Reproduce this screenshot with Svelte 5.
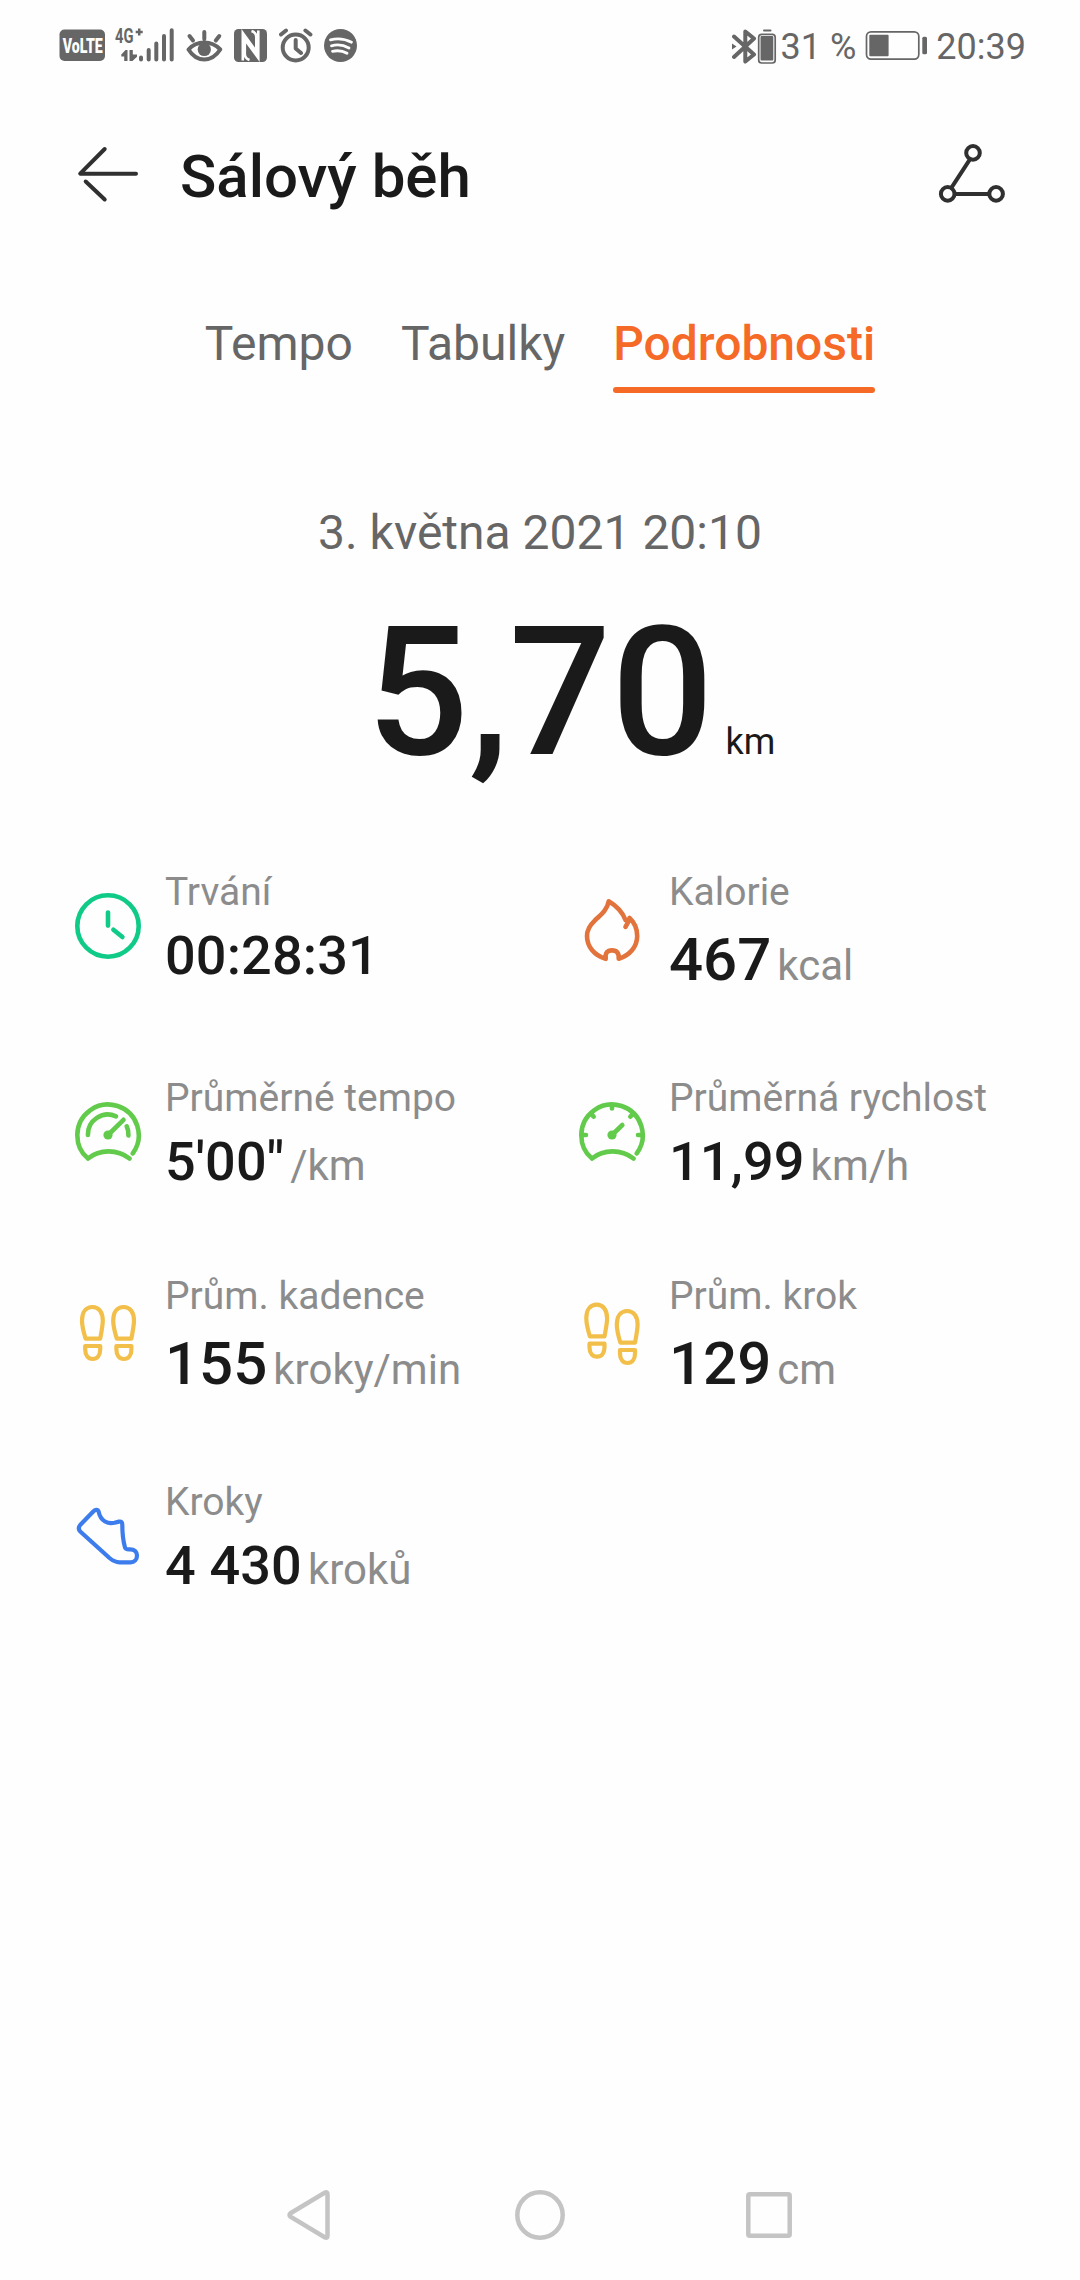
<script>
  const tabs = [
    { label: 'Tempo', active: false },
    { label: 'Tabulky', active: false },
    { label: 'Podrobnosti', active: true }
  ];

  const stats = [
    { icon: 'clock', label: 'Trvání', value: '00:28:31', unit: '', large: false },
    { icon: 'flame', label: 'Kalorie', value: '467', unit: 'kcal', large: true },
    { icon: 'pace', label: 'Průměrné tempo', value: `5'00"`, unit: '/km', large: false },
    { icon: 'speed', label: 'Průměrná rychlost', value: '11,99', unit: 'km/h', large: false },
    { icon: 'cadence', label: 'Prům. kadence', value: '155', unit: 'kroky/min', large: true },
    { icon: 'stride', label: 'Prům. krok', value: '129', unit: 'cm', large: true },
    { icon: 'shoe', label: 'Kroky', value: '4 430', unit: 'kroků', large: false }
  ];
</script>

{#snippet foot(x, y)}
  <g transform="translate({x} {y})">
    <path d="M5.6 33.7C3.2 26 2 20.500 2 15.500C2 7.500 5.800 2 12.400 2S22.800 7.500 22.800 15.500C22.800 20.500 21.600 26 20.200 33.700Z" />
    <path d="M5.200 41H20.200V44.500C20.200 50.500 17.200 54 12.700 54S5.200 50.500 5.200 44.500Z" />
  </g>
{/snippet}

{#snippet icon(name)}
  <svg class="icon {name}" viewBox="0 0 72 72" width="72" height="72">
    {#if name === 'clock'}
      <circle cx="36" cy="36" r="30.700" />
      <path d="M36 22.600V35.600M41.400 39.800L50.400 47" />
    {:else if name === 'flame'}
      <path d="M49.500 27C47 20.500 41.500 13.500 32.700 8.300C31 17.500 24.500 22 18.500 27.800C13.500 32.500 11 37.500 11 43C11 53.500 18 62.200 29.700 65.800C29 60 31.200 57.400 36 57.400S43.200 60 42.700 65.800C54 62.200 61.200 53.500 61.200 43C61.200 36 58.500 29.500 53.500 25C53 28.500 51.500 31 49.500 33.800" />
    {:else if name === 'pace'}
      <path d="M16 62.500C9 57 5.300 48.500 5.300 39A30.700 30.700 0 1 1 60.800 57.300M16 62.500C27.500 53 45.500 53 57.500 62.500" />
      <path d="M15.900 39A20 20 0 0 1 44 20.300M54.700 30.300C56 33 56.600 36 56.400 39.500M36 39L51.500 23.800" />
      <circle class="hub" cx="36" cy="39" r="4.600" />
    {:else if name === 'speed'}
      <path d="M16 62.500C9 57 5.300 48.500 5.300 39A30.700 30.700 0 1 1 60.800 57.300M16 62.500C27.500 53 45.500 53 57.500 62.500" />
      <path d="M36 9V12.500M15.200 18.200L17.700 20.700M56.800 18.200L54.300 20.700M6 39H10M66 39H62M36 39L46.300 29" />
      <circle class="hub" cx="36" cy="39" r="4.600" />
    {:else if name === 'cadence'}
      {@render foot(8, 8)}
      {@render foot(39.2, 8)}
    {:else if name === 'stride'}
      {@render foot(8.300, 5.700)}
      {@render foot(38.800, 12)}
    {:else if name === 'shoe'}
      <path d="M26.500 11.200C28.500 22 36.500 24 42.500 22.800L47 21.600C49.500 21.200 50.300 22.500 50.300 25C50.300 34 51.200 41 53 47.500C53.600 49.600 55.500 49.300 58 49.300C62.500 49.300 65 52 65 55.500C65 59.500 62.500 62.300 58.500 62.300H47.500C43.500 62.300 40.500 60.500 37.500 58L8.500 31.800C6.500 29.800 6.300 27.300 8.200 25L21 11.700C23 9.700 25.800 9.200 26.500 11.200Z" />
    {/if}
  </svg>
{/snippet}

<div class="screen">
  <div class="status">
    <div class="group left">
      <svg viewBox="59 20 117 51" width="117" height="51">
        <rect x="59.500" y="29.500" width="45.500" height="31.500" rx="5" />
        <text class="volte" x="62.700" y="52.500" textLength="40" lengthAdjust="spacingAndGlyphs">VoLTE</text>
        <text class="net" x="115" y="42.800" textLength="18.500" lengthAdjust="spacingAndGlyphs">4G</text>
        <path class="line thin" d="M139.200 28.500V35.500M135.700 32H142.700" />
        <path d="M127.500 50V61H124.200V56.500H121.300V54.500L125.500 50ZM129.500 50H132.800V54.500H137V56.800L132.500 61H129.500Z" />
        <path class="line bars" d="M141 57.500V59.500M148.700 50V59.500M156.300 43.500V59.500M164 36V59.500M171.700 30.300V59.500" />
      </svg>
      <svg class="eye" viewBox="186 28 37 35" width="37" height="35">
        <path class="line" d="M188.500 49.500C193 44.500 198 42.500 204.300 42.500S215.500 44.500 220.300 49.500C216 56 211 59.500 204.300 59.500S192.500 56 188.500 49.500ZM204.300 32V39M189.500 36L193 40.500M219.300 36L215.800 40.500" />
        <circle cx="204.300" cy="49.500" r="6.600" />
      </svg>
      <svg class="nfc" viewBox="234 28 33 35" width="33" height="35">
        <rect x="234" y="29" width="33" height="33" rx="4.500" />
        <path class="cut" d="M242.800 60.500V33L256.300 51.500V37C256.300 33.500 254.500 32 251.500 31M258.300 30.500V58L244.800 39.500V54C244.800 57.500 246.500 59 249.500 60" />
      </svg>
      <svg class="alarm" viewBox="279 28 34 35" width="34" height="35">
        <circle class="line" cx="295.700" cy="47.500" r="13" />
        <path class="line" d="M295.700 40V48.500L301 53M281 34.500L286 30.500M310.400 34.500L305.400 30.500" />
      </svg>
      <svg class="music" viewBox="324 28 33 35" width="33" height="35">
        <circle cx="340.500" cy="45.500" r="16.500" />
        <path class="cut" d="M330.500 39.800C337.500 38 345 38.800 351.500 42.200M331.500 45.800C337.500 44.200 343.500 45 349 48M332.500 51.300C337.500 50.200 342.500 50.700 347 53.300" />
      </svg>
    </div>
    <div class="group right">
      <svg viewBox="731 28 45 36" width="45" height="36">
        <path class="line" d="M733 35.500L753 53.500L744.300 60.500V30.500L753 37.500L733 56" />
        <path d="M731 42.500L735.500 45.500L731 48.500Z" />
        <rect class="hair" x="757.700" y="33.300" width="16.500" height="28.700" rx="3" />
        <rect x="759.500" y="35" width="12.800" height="24.500" rx="1" />
        <rect x="762" y="28.500" width="8.500" height="2" rx="1" />
      </svg>
      <span class="percent">31 %</span>
      <svg class="battery" viewBox="865 30 63 31" width="63" height="31">
        <rect class="hair" x="866.500" y="31.800" width="52.300" height="27.300" rx="4.500" />
        <rect x="869.300" y="34.700" width="19.300" height="21.600" rx="1" />
        <rect x="922.300" y="36.700" width="4.700" height="17.500" rx="1.500" />
      </svg>
      <span>20:39</span>
    </div>
  </div>

  <header>
    <svg viewBox="76 144 64 60" width="64" height="60">
      <path d="M104.700 149L80.200 173.700H136M85.700 181.500L104.700 199.500" />
    </svg>
    <h1>Sálový běh</h1>
    <svg viewBox="938 142 70 62" width="70" height="62">
      <path d="M969.900 158.300L951.500 186.700M955 192.900H989" />
      <circle cx="973" cy="151.900" r="6.800" />
      <circle cx="947.700" cy="192.900" r="6.800" />
      <circle cx="996.100" cy="192.900" r="6.800" />
    </svg>
  </header>

  <nav class="tabs">
    {#each tabs as tab}
      <div class="tab" class:active={tab.active}>{tab.label}</div>
    {/each}
  </nav>

  <div class="date">3. května 2021 20:10</div>
  <div class="distance">
    <span class="amount">5,70</span>
    <span class="km">km</span>
  </div>

  <section class="stats">
    {#each stats as stat}
      <div class="stat">
        {@render icon(stat.icon)}
        <div class="info">
          <div class="label">{stat.label}</div>
          <div class="reading" class:large={stat.large}>
            <span class="value">{stat.value}</span>
            {#if stat.unit}<span class="unit">{stat.unit}</span>{/if}
          </div>
        </div>
      </div>
    {/each}
  </section>

  <div class="system">
    <svg viewBox="0 0 54 54" width="54" height="54"><path d="M6.500 25.200L41 4.500Q43.500 3.500 43.500 6.500V47.500Q43.500 50.500 41 49.500L6.500 28.800Q4.500 27 6.500 25.200Z" /></svg>
    <svg viewBox="0 0 54 54" width="54" height="54"><circle cx="27" cy="27" r="22.700" /></svg>
    <svg viewBox="0 0 54 54" width="54" height="54"><rect x="6.300" y="6.300" width="41.400" height="41.400" rx="1.500" /></svg>
  </div>
</div>

<style>
  :global(body) {
    margin: 0;
    background: #fefefe;
  }

  .screen {
    display: flex;
    flex-direction: column;
    box-sizing: border-box;
    width: 1080px;
    height: 2280px;
    font-family: Roboto, 'Noto Sans', sans-serif;
    color: #1a1a1a;
    background: #fefefe;
  }

  svg {
    display: block;
    flex: none;
  }

  .status {
    display: flex;
    justify-content: space-between;
    align-items: center;
    height: 93px;
    padding: 0 54px 0 59px;
    box-sizing: border-box;
    font-size: 36px;
    line-height: 42px;
    color: #666;
    fill: #666;
  }

  .group {
    display: flex;
    align-items: center;
  }

  .group.left {
    margin-bottom: 2px;
  }

  .eye {
    margin-left: 10px;
  }

  .nfc {
    margin-left: 11px;
  }

  .alarm {
    margin-left: 12px;
  }

  .music {
    margin-left: 11px;
  }

  .percent {
    margin-left: 4px;
  }

  .battery {
    margin: 0 8px 2px 9px;
  }

  .volte {
    font-size: 20px;
    font-weight: 900;
    fill: #fefefe;
  }

  .net {
    font-size: 20px;
    font-weight: 700;
  }

  .status .line {
    fill: none;
    stroke: #666;
    stroke-width: 4;
    stroke-linecap: round;
    stroke-linejoin: round;
  }

  .status .thin {
    stroke-width: 2.5;
    stroke-linecap: butt;
  }

  .status .hair {
    fill: none;
    stroke: #666;
    stroke-width: 1.700;
  }

  .status .cut {
    fill: none;
    stroke: #fefefe;
    stroke-width: 2.800;
    stroke-linecap: round;
  }

  .nfc .cut {
    stroke-width: 2.600;
    stroke-linecap: butt;
  }

  header {
    display: flex;
    align-items: center;
    height: 167px;
    padding: 0 72px 0 76px;
    box-sizing: border-box;
  }

  header svg {
    margin-bottom: 5px;
    fill: none;
    stroke: #303030;
    stroke-width: 4;
    stroke-linecap: round;
    stroke-linejoin: round;
  }

  h1 {
    flex: 1;
    margin: 0 0 0 40px;
    font-size: 60px;
    font-weight: 500;
    line-height: 70px;
  }

  .tabs {
    display: flex;
    justify-content: center;
    gap: 48px;
    height: 78px;
    margin-top: 56px;
    font-size: 48px;
    line-height: 56px;
    color: #666;
  }

  .active {
    font-weight: 500;
    color: #f56a27;
  }

  .active::after {
    content: '';
    display: block;
    height: 6px;
    margin-top: 15px;
    border-radius: 3px;
    background: #f56a27;
  }

  .date {
    margin-top: 111px;
    font-size: 48px;
    line-height: 56px;
    text-align: center;
    color: #666;
  }

  .distance {
    display: grid;
    grid-template-columns: 1fr auto 1fr;
    align-items: baseline;
    height: 180px;
    margin-top: 42px;
  }

  .amount {
    grid-column: 2;
    font-size: 180px;
    font-weight: 500;
    line-height: 180px;
  }

  .km {
    margin-left: 12px;
    font-size: 36px;
    line-height: 42px;
  }

  .stats {
    display: grid;
    grid-template-columns: 504px 504px;
    grid-template-rows: 206px 198px 206px 116px;
    align-items: start;
    margin-top: 85px;
    padding-left: 72px;
  }

  .stat {
    display: flex;
    align-items: center;
    gap: 21px;
  }

  .info {
    padding-top: 1px;
    margin-bottom: -1px;
  }

  .label {
    font-size: 39px;
    line-height: 46px;
    color: #8c8c8c;
  }

  .reading {
    display: flex;
    align-items: baseline;
    height: 56px;
    margin-top: 13px;
    font-size: 54px;
    font-weight: 500;
    line-height: 56px;
    letter-spacing: 0.15px;
    white-space: pre;
  }

  .reading.large {
    height: 60px;
    margin-top: 15px;
    font-size: 60px;
    line-height: 60px;
    letter-spacing: 0;
  }

  .unit {
    margin-left: 6px;
    font-size: 42px;
    font-weight: 400;
    line-height: 50px;
    letter-spacing: 0;
    color: #8c8c8c;
  }

  .icon {
    fill: none;
    stroke: currentColor;
    stroke-width: 4.600;
    stroke-linecap: round;
    stroke-linejoin: round;
  }

  .icon .hub {
    fill: currentColor;
    stroke: none;
  }

  .clock {
    color: #10cb88;
  }

  .flame {
    color: #e3733c;
  }

  .pace,
  .speed {
    color: #63cb4c;
  }

  .cadence,
  .stride {
    color: #f2bf4a;
    stroke-width: 4.200;
  }

  .shoe {
    color: #3c7cec;
    stroke-width: 4.200;
  }

  .system {
    display: flex;
    justify-content: center;
    gap: 175px;
    margin-top: auto;
    margin-bottom: 38px;
    fill: none;
    stroke: #c4c4c4;
    stroke-width: 4.500;
  }
</style>
